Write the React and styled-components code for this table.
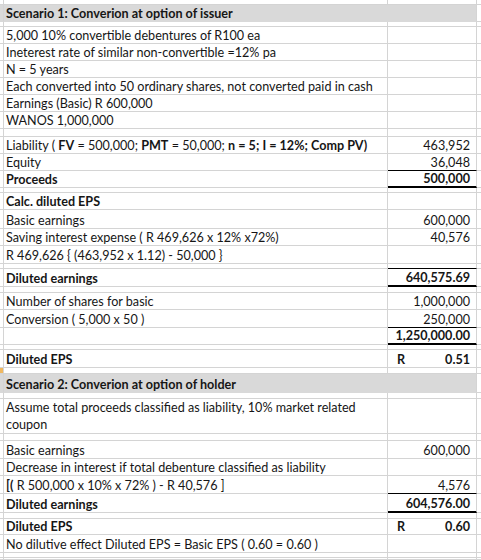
import React from "react";
import styled, { createGlobalStyle, css } from "styled-components";

const GRID = "#d4d4d4";
const FILL = "#d9d9d9";

const Global = createGlobalStyle`
  html, body { margin: 0; padding: 0; background: #fff; }
  body { font-family: Lato, "Open Sans", "Liberation Sans", sans-serif; }
`;

const Sheet = styled.div`
  width: 481px;
  height: 560px;
  overflow: hidden;
  background: #fff;
  color: #161616;
  font-family: Lato, "Liberation Sans", sans-serif;
  font-size: 12.6px;
`;

const Row = styled.div`
  display: grid;
  grid-template-columns: 4px 384px 89px 4px;
  height: ${(p) => p.$h}px;
`;

const Cell = styled.div`
  box-sizing: border-box;
  border-right: 1px solid ${GRID};
  border-bottom: 1px solid ${GRID};
  overflow: hidden;
  display: flex;
  align-items: flex-end;
  white-space: nowrap;
  line-height: 15px;
  min-width: 0;
`;

const Stub = styled(Cell)`
  background: ${(p) => (p.$mark ? "#f0b860" : p.$fill ? FILL : "#fff")};
  ${(p) =>
    p.$fill &&
    css`
      border-bottom-color: ${FILL};
    `}
`;

const Tail = styled(Cell)`
  border-right: none;
`;

const Label = styled(Cell)`
  padding-left: 2px;
  font-weight: ${(p) => (p.$bold ? 700 : 400)};
  ${(p) =>
    p.$wrap &&
    css`
      white-space: normal;
      line-height: 17px;
    `}
`;

const Header = styled(Cell)`
  grid-column: span 2;
  background: ${FILL};
  border-bottom-color: ${FILL};
  padding-left: 2px;
  font-weight: 700;
`;

const Value = styled(Cell)`
  justify-content: ${(p) => (p.$currency ? "space-between" : "flex-end")};
  padding: 0 6px 0 9px;
  font-weight: ${(p) => (p.$bold ? 700 : 400)};
  ${(p) =>
    p.$under === "thin" &&
    css`
      border-bottom: 1px solid #000;
    `}
  ${(p) =>
    p.$under === "thick" &&
    css`
      border-bottom: 2px solid #000;
    `}
`;

const B = styled.b`
  font-weight: 700;
`;

const SheetRow = ({ h, label, value, bold, vbold, under, currency, wrap, mark, header }) => {
  if (header) {
    return (
      <Row $h={h}>
        <Stub $fill />
        <Header>{label}</Header>
        <Tail />
      </Row>
    );
  }
  return (
    <Row $h={h}>
      <Stub $mark={mark} />
      <Label $bold={bold} $wrap={wrap}>
        {label}
      </Label>
      <Value $bold={vbold} $under={under} $currency={!!currency}>
        {currency ? <span>{currency}</span> : null}
        {value ? <span>{value}</span> : null}
      </Value>
      <Tail />
    </Row>
  );
};

const rows = [
  { h: 5 },
  { h: 17, header: true, label: "Scenario 1: Converion at option of issuer" },
  { h: 5 },
  { h: 17, label: "5,000 10% convertible debentures of R100 ea" },
  { h: 17, label: "Ineterest rate of similar non-convertible =12% pa" },
  { h: 17, label: "N = 5 years" },
  { h: 17, label: "Each converted into 50 ordinary shares, not converted paid in cash" },
  { h: 17, label: "Earnings (Basic) R 600,000" },
  { h: 17, label: "WANOS 1,000,000" },
  { h: 8 },
  {
    h: 17,
    label: (
      <span>
        Liability ( <B>FV</B> = 500,000; <B>PMT</B> = 50,000; <B>n = 5; I = 12%; Comp PV)</B>
      </span>
    ),
    value: "463,952",
  },
  { h: 17, label: "Equity", value: "36,048", under: "thin" },
  { h: 17, label: "Proceeds", bold: true, value: "500,000", vbold: true, under: "thick" },
  { h: 5 },
  { h: 17, label: "Calc. diluted EPS", bold: true },
  { h: 19, label: "Basic earnings", value: "600,000" },
  { h: 17, label: "Saving interest expense ( R 469,626 x 12% x72%)", value: "40,576" },
  { h: 18, label: "R 469,626 { (463,952 x 1.12) - 50,000 }" },
  { h: 5, under: "thin" },
  { h: 18, label: "Diluted earnings", bold: true, value: "640,575.69", vbold: true, under: "thick" },
  { h: 6 },
  { h: 17, label: "Number of shares for basic", value: "1,000,000" },
  { h: 18, label: "Conversion ( 5,000 x 50 )", value: "250,000", under: "thin" },
  { h: 17, label: "", value: "1,250,000.00", vbold: true, under: "thick" },
  { h: 5 },
  { h: 18, label: "Diluted EPS", bold: true, currency: "R", value: "0.51", vbold: true },
  { h: 6, mark: true },
  { h: 19, header: true, label: "Scenario 2: Converion at option of holder" },
  { h: 6 },
  {
    h: 35,
    wrap: true,
    label: (
      <span>
        Assume total proceeds classified as liability, 10% market related
        <br />
        coupon
      </span>
    ),
  },
  { h: 7 },
  { h: 18, label: "Basic earnings", value: "600,000" },
  { h: 17, label: "Decrease in interest if total debenture classified as liability" },
  {
    h: 18,
    label: (
      <span>
        <B>[(</B> R 500,000 x 10% x 72% ) - R 40,576 ]
      </span>
    ),
    value: "4,576",
    under: "thin",
  },
  { h: 19, label: "Diluted earnings", bold: true, value: "604,576.00", vbold: true, under: "thick" },
  { h: 6 },
  { h: 16, label: "Diluted EPS", bold: true, currency: "R", value: "0.60", vbold: true },
  { h: 18, label: "No dilutive effect Diluted EPS = Basic EPS ( 0.60 = 0.60 )" },
  { h: 5 },
  { h: 2 },
];

export default function App() {
  return (
    <>
      <Global />
      <Sheet>
        {rows.map((r, i) => (
          <SheetRow key={i} {...r} />
        ))}
      </Sheet>
    </>
  );
}
